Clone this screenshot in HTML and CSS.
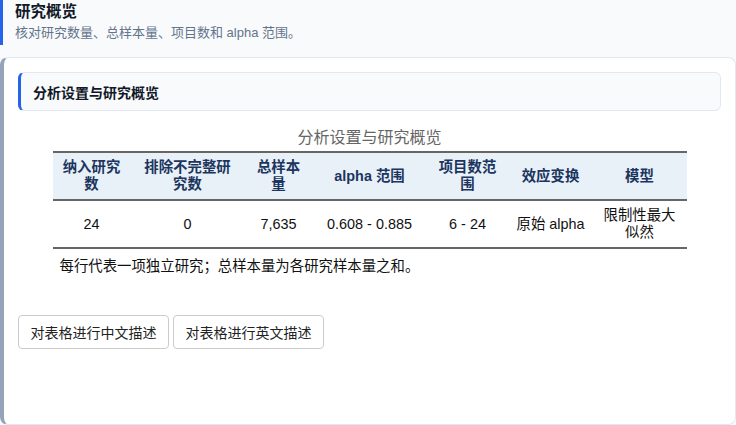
FILE: index.html
```html
<!DOCTYPE html>
<html lang="zh">
<head>
<meta charset="utf-8">
<title>研究概览</title>
<link rel="stylesheet" href="styles.css">
</head>
<body>
<header class="page-head">
  <h1 class="page-title">研究概览</h1>
  <p class="page-sub">核对研究数量、总样本量、项目数和 alpha 范围。</p>
</header>
<section class="card">
  <div class="section-head">分析设置与研究概览</div>
  <div class="table-wrap">
    <div class="table-caption">分析设置与研究概览</div>
    <table class="data">
      <colgroup>
        <col class="c1"><col class="c2"><col class="c3"><col class="c4"><col class="c5"><col class="c6"><col class="c7">
      </colgroup>
      <thead>
        <tr>
          <th>纳入研究数</th>
          <th>排除不完整研究数</th>
          <th>总样本量</th>
          <th>alpha 范围</th>
          <th>项目数范围</th>
          <th>效应变换</th>
          <th>模型</th>
        </tr>
      </thead>
      <tbody>
        <tr>
          <td>24</td>
          <td>0</td>
          <td>7,635</td>
          <td>0.608 - 0.885</td>
          <td>6 - 24</td>
          <td>原始 alpha</td>
          <td>限制性最大似然</td>
        </tr>
      </tbody>
    </table>
    <p class="table-note">每行代表一项独立研究；总样本量为各研究样本量之和。</p>
  </div>
  <div class="actions">
    <button class="btn" type="button">对表格进行中文描述</button>
    <button class="btn" type="button">对表格进行英文描述</button>
  </div>
</section>
</body>
</html>
```
FILE: styles.css
```css
* { box-sizing: border-box; }
html, body {
  margin: 0;
  padding: 0;
}
body {
  background: #f8fafc;
  font-family: "Liberation Sans", "Noto Sans CJK SC", sans-serif;
  color: #111827;
  width: 736px;
  height: 425px;
  overflow: hidden;
}
.page-head {
  border-left: 3px solid #2563eb;
  padding: 3px 12px 0 12px;
  height: 45px;
  margin-bottom: 12px;
}
.page-title {
  margin: 0;
  font-size: 15.5px;
  font-weight: 700;
  line-height: 18px;
  color: #111827;
}
.page-sub {
  margin: 4px 0 0 0;
  font-size: 13px;
  line-height: 16px;
  color: #64748b;
}
.card {
  background: #ffffff;
  border: 1px solid #e2e8f0;
  border-left: 4px solid #94a3b8;
  border-radius: 8px;
  width: 736px;
  height: 368px;
  padding: 14px 14px 0 14px;
}
.section-head {
  background: #f8fafc;
  border: 1px solid #e2e8f0;
  border-left: 3px solid #2563eb;
  border-radius: 6px;
  height: 39px;
  padding: 0 12px;
  display: flex;
  align-items: center;
  font-size: 14px;
  font-weight: 700;
  color: #111827;
}
.table-wrap {
  width: 634px;
  margin: 0 auto;
  padding-top: 16px;
}
.table-caption {
  text-align: center;
  font-size: 16px;
  line-height: 22px;
  color: #666666;
  margin-bottom: 2px;
}
.data {
  width: 634px;
  table-layout: fixed;
  border-collapse: collapse;
  font-size: 14.4px;
  line-height: 17px;
}
.c1 { width: 78px; }
.c2 { width: 114px; }
.c3 { width: 68px; }
.c4 { width: 114px; }
.c5 { width: 82px; }
.c6 { width: 84px; }
.c7 { width: 94px; }
.data thead th {
  background: #e8f0f8;
  color: #1c355e;
  font-weight: 700;
  border-top: 2px solid #666666;
  border-bottom: 2px solid #666666;
  padding: 6px 8px;
  text-align: center;
  height: 48px;
}
.data tbody td {
  color: #111111;
  text-align: center;
  padding: 6px 8px;
  border-bottom: 2px solid #666666;
  height: 48px;
}
.table-note {
  margin: 8px 0 0 0;
  padding-left: 7px;
  font-size: 14.4px;
  line-height: 19px;
  color: #111111;
}
.actions {
  display: flex;
  gap: 4px;
  margin-top: 39px;
}
.btn {
  font-family: "Liberation Sans", "Noto Sans CJK SC", sans-serif;
  font-size: 14px;
  color: #222222;
  background: #ffffff;
  border: 1px solid #cccccc;
  border-radius: 4px;
  height: 34px;
  width: 151px;
  padding: 0;
  cursor: pointer;
}
```
